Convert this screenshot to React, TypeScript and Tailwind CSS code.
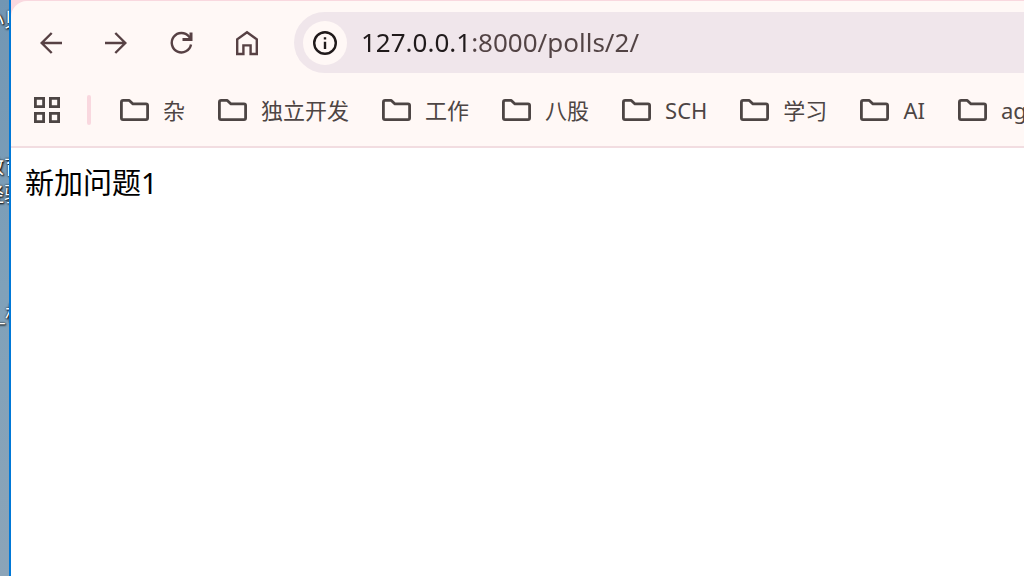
import type { ReactNode } from 'react';

const bookmarks = ['杂', '独立开发', '工作', '八股', 'SCH', '学习', 'AI', 'agent'];

function NavButton({ label, children }: { label: string; children: ReactNode }) {
  return (
    <button type="button" aria-label={label} className="flex size-8 shrink-0 items-center justify-center text-[#574144]">
      <svg width="28" height="28" viewBox="0 0 28 28" fill="none" stroke="currentColor" strokeWidth="2.4">
        {children}
      </svg>
    </button>
  );
}

function FolderIcon() {
  return (
    <svg width="30" height="22" viewBox="0 0 30 22" fill="none" stroke="#4d4544" strokeWidth="2.8" strokeLinejoin="round" className="shrink-0">
      <path d="M3.2 1.4H9.3L13 4.9H26Q27.6 4.9 27.6 6.5V19Q27.6 20.6 26 20.6H3Q1.4 20.6 1.4 19V3.2Q1.4 1.4 3.2 1.4Z" />
    </svg>
  );
}

function Desktop() {
  return (
    <div className="relative w-[9px] shrink-0 overflow-hidden bg-linear-to-b from-[#7296b3] via-[#80a1b9] to-[#8ba4b8] text-xl leading-7 whitespace-nowrap text-white [text-shadow:1px_1px_2px_#000,0_0_2px_#000]">
      <span className="absolute top-1.5 -left-4">小贝</span>
      <span className="absolute top-[153px] -left-4">
        教育
        <br />
        经验
      </span>
      <span className="absolute top-[300px] -left-1">_材</span>
    </div>
  );
}

export default function App() {
  return (
    <div className="flex min-h-screen overflow-hidden bg-white font-['Noto_Sans','Noto_Sans_CJK_SC',sans-serif]">
      <Desktop />
      <div className="flex min-w-0 flex-1 flex-col border-l-2 border-[#0078d7]">
        <header className="border-b-2 border-[#f2dde1] bg-[#f9d8df] pt-px">
          <div className="rounded-tl-2xl bg-[#fff8f6]">
            <div className="flex h-[83px] items-center pl-6">
              <nav aria-label="导航" className="flex gap-[33px]">
                <NavButton label="后退">
                  <path d="M25 14H4.5M14.7 4L4.7 14L14.7 24" />
                </NavButton>
                <NavButton label="前进">
                  <path d="M3 14H23.5M13.3 4L23.3 14L13.3 24" />
                </NavButton>
                <NavButton label="重新加载">
                  <path d="M24 15.5A9.7 9.7 0 1 1 22 7.6L23.4 9.5" />
                  <path d="M24 3.5V10.5H15.5" strokeWidth="3" />
                </NavButton>
                <NavButton label="主页">
                  <path d="M5.2 25V10.4L15 3.2L24.8 10.4V25H18.6V16.4H11.4V25Z" />
                </NavButton>
              </nav>
              <div className="ml-8 flex h-[61px] min-w-0 flex-1 items-center rounded-l-full bg-[#f0e6eb] pl-[9px]">
                <button type="button" aria-label="查看网站信息" className="flex size-11 shrink-0 items-center justify-center rounded-full bg-[#fff8f6] text-[#201a1b]">
                  <svg width="26" height="26" viewBox="0 0 26 26" fill="none" stroke="currentColor" strokeWidth="2.4">
                    <circle cx="13" cy="13" r="10.8" />
                    <path d="M13 11.8V19M13 7.2V9.6" />
                  </svg>
                </button>
                <input
                  type="text"
                  aria-label="地址"
                  defaultValue="127.0.0.1:8000/polls/2/"
                  className="ml-[14px] min-w-0 flex-1 bg-linear-to-r from-[#201a1b] from-[110px] to-[#524344] to-[110px] bg-clip-text text-[26px] text-transparent caret-black outline-none"
                />
              </div>
            </div>
            <div className="flex h-[62px] items-start overflow-hidden pt-[11px] pl-[23px]">
              <button type="button" aria-label="应用" className="flex h-[30px] shrink-0 items-center">
                <svg width="26" height="26" viewBox="0 0 26 26" fill="none" stroke="#4d4544" strokeWidth="2.8">
                  <path d="M1.4 1.4H9.6V9.6H1.4ZM16.4 1.4H24.6V9.6H16.4ZM1.4 16.4H9.6V24.6H1.4ZM16.4 16.4H24.6V24.6H16.4Z" />
                </svg>
              </button>
              <div className="mr-[29px] ml-[27px] h-[30px] w-1 shrink-0 rounded-full bg-[#f9d8df]" />
              <nav aria-label="书签" className="flex gap-[33px]">
                {bookmarks.map((name) => (
                  <a key={name} href="#" className="flex h-[30px] shrink-0 items-center gap-[13px] text-[22px] whitespace-nowrap text-[#4d4544]">
                    <FolderIcon />
                    {name}
                  </a>
                ))}
              </nav>
            </div>
          </div>
        </header>
        <main className="px-3.5 pt-[17px] text-[29px] leading-9 text-black">新加问题1</main>
      </div>
    </div>
  );
}
